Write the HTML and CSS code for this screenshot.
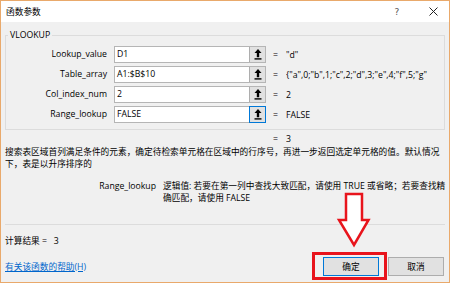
FILE: index.html
```html
<!DOCTYPE html>
<html lang="zh-CN">
<head>
<meta charset="utf-8">
<link rel="stylesheet" href="styles.css">
</head>
<body>
<div class="window">
  <div class="titlebar">
    <span class="title">函数参数</span>
    <span class="tb-help">?</span>
    <span class="tb-close"><svg width="9" height="9" viewBox="0 0 9 9"><path d="M0.5 0.5 L8.5 8.5 M8.5 0.5 L0.5 8.5" stroke="#222" stroke-width="1" fill="none"/></svg></span>
  </div>
  <div class="content">
    <fieldset class="group">
      <legend class="group-title">VLOOKUP</legend>
      <div class="args">
        <label class="arg-label">Lookup_value</label>
        <div class="ref"><span class="ref-text">D1</span><span class="pick"><svg width="8" height="11" viewBox="0 0 8 11"><polygon points="4,0 7.5,4 5.2,4 5.2,8.2 2.8,8.2 2.8,4 0.5,4" fill="#000"/><rect x="0.5" y="9.2" width="7" height="1.4" fill="#000"/></svg></span></div>
        <span class="eq">=</span><span class="val">"d"</span>

        <label class="arg-label">Table_array</label>
        <div class="ref"><span class="ref-text">A1:$B$10</span><span class="pick"><svg width="8" height="11" viewBox="0 0 8 11"><polygon points="4,0 7.5,4 5.2,4 5.2,8.2 2.8,8.2 2.8,4 0.5,4" fill="#000"/><rect x="0.5" y="9.2" width="7" height="1.4" fill="#000"/></svg></span></div>
        <span class="eq">=</span><span class="val">{"a",0;"b",1;"c",2;"d",3;"e",4;"f",5;"g"</span>

        <label class="arg-label">Col_index_num</label>
        <div class="ref"><span class="ref-text">2</span><span class="pick"><svg width="8" height="11" viewBox="0 0 8 11"><polygon points="4,0 7.5,4 5.2,4 5.2,8.2 2.8,8.2 2.8,4 0.5,4" fill="#000"/><rect x="0.5" y="9.2" width="7" height="1.4" fill="#000"/></svg></span></div>
        <span class="eq">=</span><span class="val">2</span>

        <label class="arg-label">Range_lookup</label>
        <div class="ref"><span class="ref-text">FALSE</span><span class="pick pick-focus"><svg width="8" height="11" viewBox="0 0 8 11"><polygon points="4,0 7.5,4 5.2,4 5.2,8.2 2.8,8.2 2.8,4 0.5,4" fill="#000"/><rect x="0.5" y="9.2" width="7" height="1.4" fill="#000"/></svg></span></div>
        <span class="eq">=</span><span class="val">FALSE</span>
      </div>
    </fieldset>

    <div class="result-row"><span></span><span></span><span class="eq">=</span><span class="val">3</span></div>

    <p class="desc">搜索表区域首列满足条件的元素，确定待检索单元格在区域中的行序号，再进一步返回选定单元格的值。默认情况<br>下，表是以升序排序的</p>

    <div class="argdesc">
      <span class="argdesc-name">Range_lookup</span>
      <span class="argdesc-text">逻辑值: 若要在第一列中查找大致匹配，请使用 TRUE 或省略；若要查找精<br>确匹配，请使用 FALSE</span>
    </div>

    <div class="separator"></div>

    <div class="footer">
      <div class="calc">计算结果 =&nbsp;&nbsp;&nbsp;3</div>
      <div class="footer-row">
        <a class="help-link" href="#">有关该函数的帮助(H)</a>
        <div class="buttons">
          <button class="btn btn-default">确定</button>
          <button class="btn">取消</button>
        </div>
      </div>
    </div>
  </div>

  <div class="mark-rect"></div>
  <svg class="mark-arrow" width="36" height="57" viewBox="0 0 36 57">
    <polygon points="10,3 26,3 26,29 32.5,29 18,54 3,29 10,29" fill="#fff" stroke="#e8141c" stroke-width="2.5" stroke-linejoin="miter"/>
  </svg>
</div>
</body>
</html>
```

FILE: styles.css
```css
* { box-sizing: border-box; }

html, body {
  margin: 0;
  padding: 0;
  background: #f0f0f0;
}

body {
  font-family: "Open Sans", "Noto Sans CJK SC", sans-serif;
  font-size: 8.7px;
  color: #000;
}

.window {
  position: relative;
  width: 450px;
  height: 283px;
  border: 1px solid #e9a96b;
  background: #f0f0f0;
  display: flex;
  flex-direction: column;
  overflow: hidden;
}

.titlebar {
  height: 21px;
  background: #fff;
  display: flex;
  align-items: center;
  padding-left: 5px;
  flex-shrink: 0;
}

.title {
  flex: 1;
  line-height: 12px;
  color: #000;
}

.tb-help {
  width: 10px;
  text-align: center;
  color: #555;
  font-family: "DejaVu Sans", sans-serif;
  font-size: 9px;
  margin-right: 25px;
}

.tb-close {
  display: flex;
  align-items: center;
  justify-content: center;
  width: 12px;
  margin-right: 10px;
}

.content {
  flex: 1;
  display: flex;
  flex-direction: column;
  padding: 0 4px 0 4px;
}

.group {
  margin: 6px 0 0 0;
  padding: 0;
  border: 1px solid #dcdcdc;
  min-width: 0;
}

.group-title {
  margin-left: 2px;
  padding: 0 2px;
  line-height: 14px;
}

.args {
  display: grid;
  grid-template-columns: 101px 152px 6px minmax(0, 1fr);
  grid-auto-rows: 17px;
  column-gap: 7px;
  row-gap: 3px;
  padding: 4px 0 6px 0;
  align-items: center;
}

.arg-label {
  text-align: right;
  line-height: 17px;
  white-space: nowrap;
}

.ref {
  display: flex;
  height: 17px;
  border: 1px solid #b5b5b5;
  background: #fff;
}

.ref-text {
  flex: 1;
  padding-left: 2px;
  line-height: 15px;
}

.pick {
  width: 16px;
  display: flex;
  align-items: center;
  justify-content: center;
  background: #e1e1e1;
  border-left: 1px solid #adadad;
}

.pick-focus {
  border: 1px solid #0078d7;
  margin: -1px -1px -1px 0;
  width: 17px;
  height: 17px;
}

.eq {
  line-height: 12px;
}

.val {
  white-space: nowrap;
  overflow: hidden;
  line-height: 12px;
}

.result-row {
  display: grid;
  grid-template-columns: 101px 152px 6px 1fr;
  column-gap: 7px;
  margin-top: 3px;
  padding-left: 1px;
  line-height: 12px;
}

.desc {
  margin: 1px 0 0 0;
  line-height: 12px;
  white-space: nowrap;
}

.argdesc {
  display: grid;
  grid-template-columns: 151px 1fr;
  column-gap: 7px;
  margin-top: 10px;
  line-height: 12px;
}

.argdesc-name {
  text-align: right;
}

.argdesc-text {
  white-space: nowrap;
}

.separator {
  margin-top: 20px;
  border-top: 1px solid #dcdcdc;
}

.footer {
  display: flex;
  flex-direction: column;
  padding-right: 1px;
}

.calc {
  margin-top: 10px;
  line-height: 12px;
}

.footer-row {
  margin-top: 10px;
  display: flex;
  align-items: center;
  justify-content: space-between;
}

.help-link {
  color: #0066cc;
  text-decoration: underline;
  line-height: 12px;
}

.buttons {
  display: flex;
  gap: 9px;
}

.btn {
  width: 56px;
  height: 19px;
  padding: 0;
  font-family: inherit;
  font-size: 8.7px;
  color: #000;
  background: #e1e1e1;
  border: 1px solid #adadad;
}

.btn-default {
  border: 1px solid #0078d7;
}

.mark-rect {
  position: absolute;
  left: 311px;
  top: 251px;
  width: 75px;
  height: 28px;
  border: 3px solid #e8141c;
}

.mark-arrow {
  position: absolute;
  left: 335px;
  top: 190px;
}
```
